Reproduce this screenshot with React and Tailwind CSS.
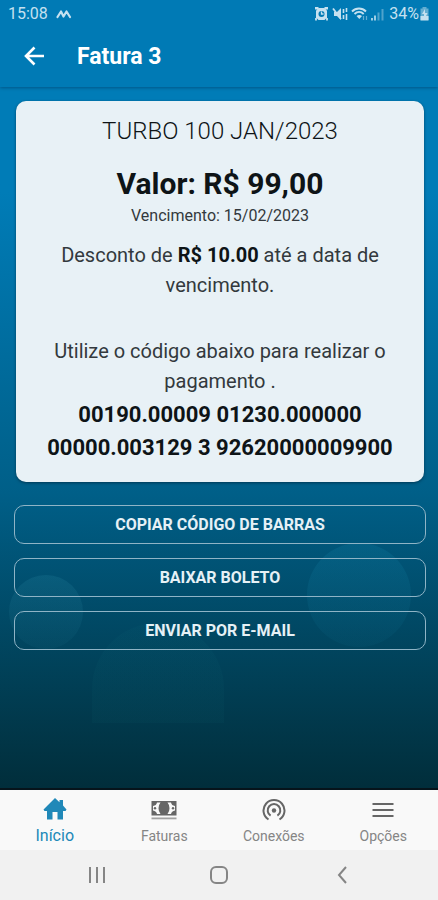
import { useState } from "react";

function ActivityGlyph() {
  return (
    <svg className="w-4 h-3" viewBox="0 0 16 12" fill="none" stroke="currentColor" strokeWidth="2.2" strokeLinecap="round" strokeLinejoin="round">
      <path d="M1.500 9 5 3.500 7.500 8.500 10.500 3.500 14 9" />
    </svg>
  );
}

function StatusIcons() {
  return (
    <svg className="w-[70px] h-4" viewBox="0 0 70 16" fill="none" stroke="currentColor">
      {/* alarm */}
      <path d="M0 1h3.500v2.500H0zM9.500 1H13v2.500H9.500z" fill="currentColor" stroke="none" />
      <path d="M1 4.500 3.500 2h6L12 4.500v7L9.500 14h-6L1 11.500z" fill="currentColor" stroke="none" />
      <path d="M1 12v2.500M12 12v2.500" strokeWidth="1.800" />
      <circle cx="6.500" cy="8" r="3" fill="#007ab5" stroke="none" />
      <path d="M6.500 5.500V8h2" strokeWidth="1.300" />
      {/* vibrate */}
      <path d="M19 6h3l4-4v12l-4-4h-3z" fill="currentColor" stroke="none" />
      <path d="M18 2.500 26 13" strokeWidth="1.800" />
      <path d="M28.500 3v4M28.500 9v4M31.500 2v4M31.500 8v6" strokeWidth="1.600" />
      {/* wifi */}
      <path d="M37 5.500c4-4 10-4 14 0M39.500 8c2.700-2.600 6.500-2.600 9.200 0" strokeWidth="1.900" />
      <path d="M41.500 10c1.800-1.500 3.800-1.500 5.500 0l-2.700 3z" fill="currentColor" stroke="none" />
      <path d="M48.500 10v4M51.500 10v4" strokeWidth="1.200" opacity=".5" />
      {/* signal */}
      <path d="M57 12v2.500M60 9.500v5" strokeWidth="1.600" />
      <path d="M63.500 6.500v8M67.500 3v11.500" strokeWidth="2" opacity=".4" />
    </svg>
  );
}

function BatteryIcon() {
  return (
    <svg className="w-[11px] h-4" viewBox="0 0 11 16" fill="currentColor">
      <path d="M3.500 1h4v1.500h2V15h-8V2.500h2z" opacity=".5" />
      <path d="M6 3 3 8h2v2H1.500v4h8v-4H7l1.500-3H6z" />
    </svg>
  );
}

function BackArrow() {
  return (
    <svg className="w-6 h-6" viewBox="0 0 24 24" fill="none" stroke="currentColor" strokeWidth="2.600">
      <path d="M22 12H4.500M12.500 3.500 4 12l8.500 8.500" />
    </svg>
  );
}

function HomeIcon() {
  return (
    <svg className="w-6 h-6" viewBox="0 0 24 24" fill="currentColor">
      <path d="M12 0 16.500 4.200V2h3.500v5.500l3.500 4-1 1.500H20v8.500h-5.500V14h-5v7.500H4V13H1.500l-1-1.500z" />
    </svg>
  );
}

function MoneyIcon() {
  return (
    <svg className="w-[26px] h-6" viewBox="0 0 26 24" fill="currentColor">
      <path fillRule="evenodd" d="M.5 3h25v14.500H.5zM6 4.500Q5.500 7.500 2 8v4.500Q5.500 13 6 16h3.500Q7.500 13.500 7.500 10.200T9.500 4.500zM20 4.500Q20.500 7.500 24 8v4.500Q20.500 13 20 16h-3.500Q18.500 13.500 18.500 10.200T16.500 4.500z" />
      <circle cx="4" cy="10.200" r="1.200" />
      <circle cx="22" cy="10.200" r="1.200" />
      <path d="M.5 19.500h25v1.800H.5z" opacity=".6" />
    </svg>
  );
}

function HotspotIcon() {
  return (
    <svg className="w-6 h-6" viewBox="0 0 24 24" fill="none" stroke="currentColor" strokeWidth="2">
      <path d="M6.500 21.500a10.500 10.500 0 1 1 11 0" />
      <path d="M8.600 17.700a6.300 6.300 0 1 1 6.800 0" />
      <circle cx="12" cy="12.500" r="2.200" fill="currentColor" stroke="none" />
    </svg>
  );
}

function MenuIcon() {
  return (
    <svg className="w-6 h-6" viewBox="0 0 24 24" fill="none" stroke="currentColor" strokeWidth="2">
      <path d="M1.500 6h21M1.500 12h21M1.500 18h21" />
    </svg>
  );
}

const tabs = [
  { name: "Início", icon: HomeIcon },
  { name: "Faturas", icon: MoneyIcon },
  { name: "Conexões", icon: HotspotIcon },
  { name: "Opções", icon: MenuIcon },
];

const actions = ["COPIAR CÓDIGO DE BARRAS", "BAIXAR BOLETO", "ENVIAR POR E-MAIL"];

export default function App() {
  const [active, setActive] = useState("Início");

  return (
    <div className="min-h-screen flex flex-col font-[Roboto,sans-serif] bg-[#f1f1f1]">
      <header className="bg-[#007ab5] text-white shadow-[0_1px_3px_rgba(0,50,90,0.5)] relative z-10">
        {/* Status bar */}
        <div className="h-7 pl-2 pr-2 flex items-center justify-between text-[#c5e1f0] text-base">
          <div className="flex items-center gap-2">
            <span>15:08</span>
            <ActivityGlyph />
          </div>
          <div className="flex items-center gap-1">
            <StatusIcons />
            <div className="flex items-center">
              <span>34%</span>
              <BatteryIcon />
            </div>
          </div>
        </div>
        <div className="h-[59px] px-[22px] pb-1 flex items-center gap-[31px]">
          <button type="button" aria-label="Voltar">
            <BackArrow />
          </button>
          <h1 className="text-[23px] leading-8 pt-[2px] font-bold">Fatura 3</h1>
        </div>
      </header>

      <main className="relative overflow-hidden flex-1 pl-[14px] pr-3 pt-[14px] pb-6 bg-linear-to-b from-[#007cb7] from-15% via-[#005f88] via-58% to-[#012e3b] border-b-2 border-[#06141b]">
        {/* Background bubbles */}
        <div className="absolute left-[2%] top-[488px] size-[74px] rounded-full bg-linear-to-b from-[#3ba0b8]/15 to-[#3ba0b8]/5" />
        <div className="absolute left-[70%] top-[456px] size-[104px] rounded-full bg-linear-to-b from-[#1c9ac0]/15 to-[#1c9ac0]/5" />
        <div className="absolute left-[21%] top-[536px] w-[132px] h-[100px] rounded-t-full bg-linear-to-b from-[#1c8a90]/5 to-[#1c8a90]/5" />

        <section className="relative mx-[2px] px-5 pt-[15px] pb-[18px] rounded-[10px] bg-[#e8f1f6] text-center text-[#33393d] shadow-[0_1px_3px_rgba(0,30,50,0.6)]">
          <h2 className="text-2xl leading-[30px] font-light text-[#0e1417]">TURBO 100 JAN/2023</h2>
          <p className="mt-5 text-3xl leading-[36px] font-bold text-[#0e1417]">Valor: R$ 99,00</p>
          <p className="mt-[2px] text-base leading-6">Vencimento: 15/02/2023</p>
          <p className="mt-3 px-5 text-xl leading-[30px]">
            Desconto de <strong className="font-bold text-[#0e1417]">R$ 10.00</strong> até a data de vencimento.
          </p>
          <p className="mt-9 text-xl leading-[30px]">Utilize o código abaixo para realizar o pagamento .</p>
          <p className="mt-[2px] text-[22px] leading-[33px] font-bold text-[#0e1417]">
            00190.00009 01230.000000 00000.003129 3 92620000009900
          </p>
        </section>

        <div className="relative mt-[23px] flex flex-col gap-[14px]">
          {actions.map((label) => (
            <button
              key={label}
              type="button"
              className="h-[39px] rounded-[10px] border border-[#8fb4c6] text-base font-bold text-[#e6f1f6]"
            >
              {label}
            </button>
          ))}
        </div>
      </main>

      {/* Tabs */}
      <nav className="h-[60px] grid grid-cols-4 bg-[#f9f9f9]">
        {tabs.map((tab) => {
          const Icon = tab.icon;
          const isActive = active === tab.name;
          return (
            <button
              key={tab.name}
              type="button"
              onClick={() => setActive(tab.name)}
              className={`pt-2 flex flex-col items-center gap-1 leading-5 ${
                isActive ? "text-[#2088b8] text-base" : "text-[#666666] text-sm"
              }`}
            >
              <Icon />
              <span className={isActive ? "" : "text-[#858585]"}>{tab.name}</span>
            </button>
          );
        })}
      </nav>

      {/* System navigation */}
      <div className="h-[50px] px-9 grid grid-cols-3 justify-items-center items-center bg-[#f1f1f1] text-[#858585]">
        <button type="button" aria-label="Recentes">
          <svg className="w-5 h-5" viewBox="0 0 20 20" fill="none" stroke="currentColor" strokeWidth="2">
            <path d="M3 2v16M10 2v16M17 2v16" />
          </svg>
        </button>
        <button type="button" aria-label="Tela inicial">
          <svg className="w-5 h-5" viewBox="0 0 20 20" fill="none" stroke="currentColor" strokeWidth="2">
            <rect x="2" y="2" width="16" height="16" rx="5" />
          </svg>
        </button>
        <button type="button" aria-label="Voltar ao anterior">
          <svg className="w-5 h-5" viewBox="0 0 20 20" fill="none" stroke="currentColor" strokeWidth="2">
            <path d="M15 2 8 10l7 8" />
          </svg>
        </button>
      </div>
    </div>
  );
}
